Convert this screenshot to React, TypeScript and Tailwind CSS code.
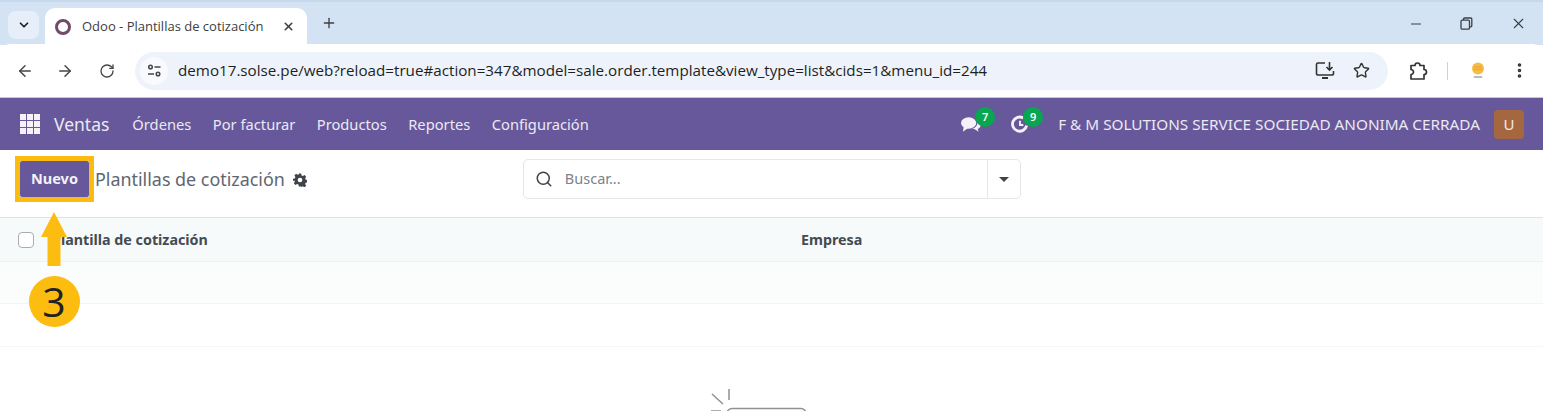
import React from 'react';
import { ArrowLeft, ArrowRight, RotateCw, ChevronDown, X, Plus, Minus, Star, Search, EllipsisVertical } from 'lucide-react';

const menu = ['Órdenes', 'Por facturar', 'Productos', 'Reportes', 'Configuración'];
const url = 'demo17.solse.pe/web?reload=true#action=347&model=sale.order.template&view_type=list&cids=1&menu_id=244';

function BrowserChrome() {
  return (
    <div className="font-['Noto_Sans','Open_Sans',sans-serif]">
      <div className="h-[45px] bg-[#d3e3f4] flex items-end pl-[8px] border-t-[2px] border-[#c5d8ec]">
        <div className="w-[31px] h-[28px] mb-[6px] rounded-[8px] bg-[#e6eff9] flex items-center justify-center text-[#1f1f1f]">
          <ChevronDown size={14} strokeWidth={3} />
        </div>
        <div className="ml-[6px] w-[262px] h-[37px] bg-white rounded-t-[10px] flex items-center pl-[10px] pr-[8px]">
          <span className="w-[16px] h-[16px] rounded-full border-[3.5px] border-[#714b67]" />
          <span className="ml-[11px] text-[13px] text-[#3c4043] font-['Open_Sans',sans-serif] whitespace-nowrap">Odoo - Plantillas de cotización</span>
          <X size={13} strokeWidth={3} className="ml-auto mr-[4px] text-[#3c4043]" />
        </div>
        <Plus size={16} strokeWidth={2} className="ml-[14px] mb-[14px] text-[#3c4043]" />
        <div className="ml-auto h-[43px] flex items-center text-[#3c4043]">
          <Minus size={16} strokeWidth={1.5} className="mr-[36px]" />
          <svg width="13" height="13" viewBox="0 0 13 13" fill="none" stroke="currentColor" strokeWidth="1.3" className="mr-[37px]">
            <rect x="1" y="3.2" width="8.5" height="9" rx="1.2" />
            <path d="M3.5 3V2a1 1 0 0 1 1-1h6.3a1 1 0 0 1 1 1v6.8a1 1 0 0 1-1 1H9.6" />
          </svg>
          <X size={17} strokeWidth={1.5} className="mr-[16px]" />
        </div>
      </div>
      <div className="h-[53px] bg-white rounded-t-[10px] -mt-px flex items-center text-[#474747]">
        <ArrowLeft size={18} strokeWidth={2} className="ml-[16px]" />
        <ArrowRight size={18} strokeWidth={2} className="ml-[22px]" />
        <RotateCw size={16} strokeWidth={2} className="ml-[25px]" />
        <div className="ml-[20px] w-[1253px] h-[38px] rounded-full bg-[#eef3fb] flex items-center pl-[5px] pr-[18px]">
          <span className="w-[28px] h-[28px] rounded-full bg-[#f8fafd] flex items-center justify-center">
            <svg width="15" height="13" viewBox="0 0 15 13" fill="none" stroke="#474747" strokeWidth="1.5">
              <circle cx="3.5" cy="3" r="1.8" />
              <path d="M7.5 3h6M1 10h6" />
              <circle cx="11" cy="10" r="1.8" />
            </svg>
          </span>
          <span className="ml-[10px] text-[15.2px] text-[#1f1f1f] font-['Open_Sans',sans-serif] whitespace-nowrap">{url}</span>
          <svg width="20" height="19" viewBox="0 0 20 19" fill="none" stroke="#333" strokeWidth="1.6" className="ml-auto mr-[18px]">
            <path d="M10 2H3a1.5 1.5 0 0 0-1.5 1.5v9A1.5 1.5 0 0 0 3 14h14a1.5 1.5 0 0 0 1.5-1.5V10" />
            <path d="M7 17h6" strokeWidth="2" />
            <path d="M14.5 1v7M11.5 6l3 3 3-3" />
          </svg>
          <Star size={17} strokeWidth={2} className="text-[#333]" />
        </div>
        <svg width="20" height="20" viewBox="0 0 20 20" fill="none" stroke="#333" strokeWidth="1.7" className="ml-[20px]">
          <path d="M3 4.5h4a2.5 2.5 0 0 1 5 0h4v4a2.5 2.5 0 0 1 0 5v4.5H3v-4.5a2.5 2.5 0 0 0 0-5z" strokeLinejoin="round" />
        </svg>
        <span className="ml-[19px] w-px h-[18px] bg-[#c9d3df]" />
        <svg width="14" height="17" viewBox="0 0 14 17" className="ml-[23px]">
          <circle cx="7" cy="6.5" r="6" fill="#f6bd45" />
          <path d="M3 5.5l2-1 2 1 2-1 2 1M3 8l2-1 2 1 2-1 2 1" fill="none" stroke="#ea9f2c" strokeWidth="1" />
          <rect x="2.5" y="14" width="9" height="2" rx="1" fill="#b9bcc0" />
        </svg>
        <EllipsisVertical size={19} strokeWidth={2.6} className="ml-[25px] text-[#333]" />
      </div>
    </div>
  );
}

function OdooNav() {
  return (
    <nav className="h-[53px] bg-[#66589a] border-t border-[#c9c6d8] flex items-center text-[#ece9f3] font-['Noto_Sans',sans-serif]">
      <div className="ml-[20px] w-[20px] h-[20px] grid grid-cols-3 gap-[1.5px]">
        {Array.from({ length: 9 }).map((_, i) => (
          <span key={i} className="bg-[#f4f1f8]" />
        ))}
      </div>
      <span className="ml-[14px] text-[17.5px]">Ventas</span>
      <div className="ml-[23px] flex gap-[21.5px] text-[14.7px]">
        {menu.map((m) => (
          <span key={m}>{m}</span>
        ))}
      </div>
      <div className="ml-auto flex items-center">
        <span className="relative w-[20px] h-[20px] flex items-center">
          <svg width="21" height="17" viewBox="0 0 21 17" fill="#f4f1f8">
            <ellipse cx="8" cy="7" rx="8" ry="6" />
            <path d="M3 10l-1 6 6-4zM17 5c2.5 1 4 3 3.5 5-.3 1.5-1.5 2.5-3 3l1 3-4-2.5c-1 0-2-.2-3-.5 4-1 6.5-4.5 5.500-8z" />
          </svg>
          <span className="absolute -top-[7px] left-[14px] w-[20px] h-[20px] rounded-full bg-[#07a64f] text-[11px] font-semibold text-white flex items-center justify-center">7</span>
        </span>
        <span className="relative ml-[30px] w-[20px] h-[20px] flex items-center">
          <svg width="18" height="18" viewBox="0 0 19 19" fill="none" stroke="#f4f1f8" strokeWidth="3">
            <path d="M13 3.2A7.5 7.5 0 1 0 16.5 11" />
            <path d="M9.5 6v4.5H13" strokeWidth="2" />
          </svg>
          <span className="absolute -top-[7px] left-[12px] w-[20px] h-[20px] rounded-full bg-[#07a64f] text-[11px] font-semibold text-white flex items-center justify-center">9</span>
        </span>
        <span className="ml-[27px] text-[15.3px] whitespace-nowrap">F &amp; M SOLUTIONS SERVICE SOCIEDAD ANONIMA CERRADA</span>
        <span className="ml-[14px] mr-[19px] w-[30px] h-[29px] rounded-[4px] bg-[#a5673f] text-[15px] text-[#f6ebe0] flex items-center justify-center">U</span>
      </div>
    </nav>
  );
}

function Toolbar() {
  return (
    <div className="h-[67px] pb-[10px] bg-white flex items-center font-['Noto_Sans',sans-serif]">
      <div className="ml-[15px] w-[79px] h-[46px] border-[5px] border-[#fbbb11] flex items-center justify-center">
        <button className="w-[69px] h-[36px] bg-[#66589a] rounded-[2px] text-[14.5px] font-bold text-[#f4f1f8]">Nuevo</button>
      </div>
      <span className="ml-[1px] mt-[2px] text-[17.9px] text-[#5f6670]">Plantillas de cotización</span>
      <svg width="14" height="14" viewBox="0 0 24 24" className="ml-[8px] mt-[2px]" fill="#3f444b">
        <path fillRule="evenodd" d="M10 1h4l.7 3.2 2.3 1 2.8-1.7 2.8 2.8-1.7 2.8 1 2.3 3.1.6v4l-3.2.7-1 2.3 1.7 2.8-2.8 2.8-2.8-1.7-2.3 1L14 23h-4l-.7-3.2-2.3-1-2.8 1.7-2.8-2.8 1.7-2.8-1-2.3L-.1 14v-4l3.2-.7 1-2.3-1.7-2.8 2.8-2.8 2.8 1.7 2.3-1zM12 8a4 4 0 1 0 0 8 4 4 0 0 0 0-8z" />
      </svg>
      <div className="ml-[216px] mt-[1px] w-[498px] h-[40px] rounded-[5px] border border-[#e3e6ea] flex items-center text-[14.5px]">
        <Search size={18} strokeWidth={2} className="ml-[11px] text-[#3f444b]" />
        <span className="ml-[12px] text-[#7b828a]">Buscar...</span>
        <span className="ml-auto w-[33px] h-full border-l border-[#e3e6ea] flex items-center justify-center">
          <span className="w-0 h-0 border-x-[5px] border-x-transparent border-t-[5px] border-t-[#3f444b]" />
        </span>
      </div>
    </div>
  );
}

function ListTable() {
  return (
    <div className="font-['Noto_Sans',sans-serif]">
      <div className="h-[45px] bg-[#f6fafb] border-t border-b border-t-[#dde3e7] border-b-[#eef2f4] flex items-center text-[14.3px] font-bold text-[#454b52]">
        <span className="ml-[18px] w-[16px] h-[16px] rounded-[4px] border border-[#a9aeb4] bg-white" />
        <span className="ml-[18px] w-[749px] whitespace-nowrap">Plantilla de cotización</span>
        <span>Empresa</span>
      </div>
      <div className="h-[42px] bg-[#fbfcfc] border-b border-[#f2f4f5]" />
      <div className="h-[43px] bg-white border-b border-[#f5f6f7]" />
      <div className="relative h-[65px] bg-white overflow-hidden">
        <svg width="110" height="65" viewBox="0 0 110 65" fill="none" stroke="#8d9196" strokeWidth="1.5" className="absolute left-[700px] top-0">
          <path d="M29 42v11M12 47l11 10M11 64h10" />
          <rect x="27" y="61.5" width="79" height="30" rx="5" />
        </svg>
      </div>
    </div>
  );
}

function Callout() {
  return (
    <div className="absolute left-[28px] top-[212px] w-[52px] flex flex-col items-center">
      <svg width="26" height="54" viewBox="0 0 26 54" fill="#fdbd10">
        <path d="M13 0L26 25H19.5V54H6.5V25H0z" />
      </svg>
      <span className="mt-[10px] w-[51px] h-[51px] rounded-full bg-[#fdbd10] text-[41px] leading-none font-medium text-[#222] font-['Open_Sans',sans-serif] flex items-center justify-center">3</span>
    </div>
  );
}

export default function App() {
  return (
    <div className="relative w-[1543px] h-[411px] overflow-hidden bg-white">
      <BrowserChrome />
      <OdooNav />
      <Toolbar />
      <ListTable />
      <Callout />
    </div>
  );
}
